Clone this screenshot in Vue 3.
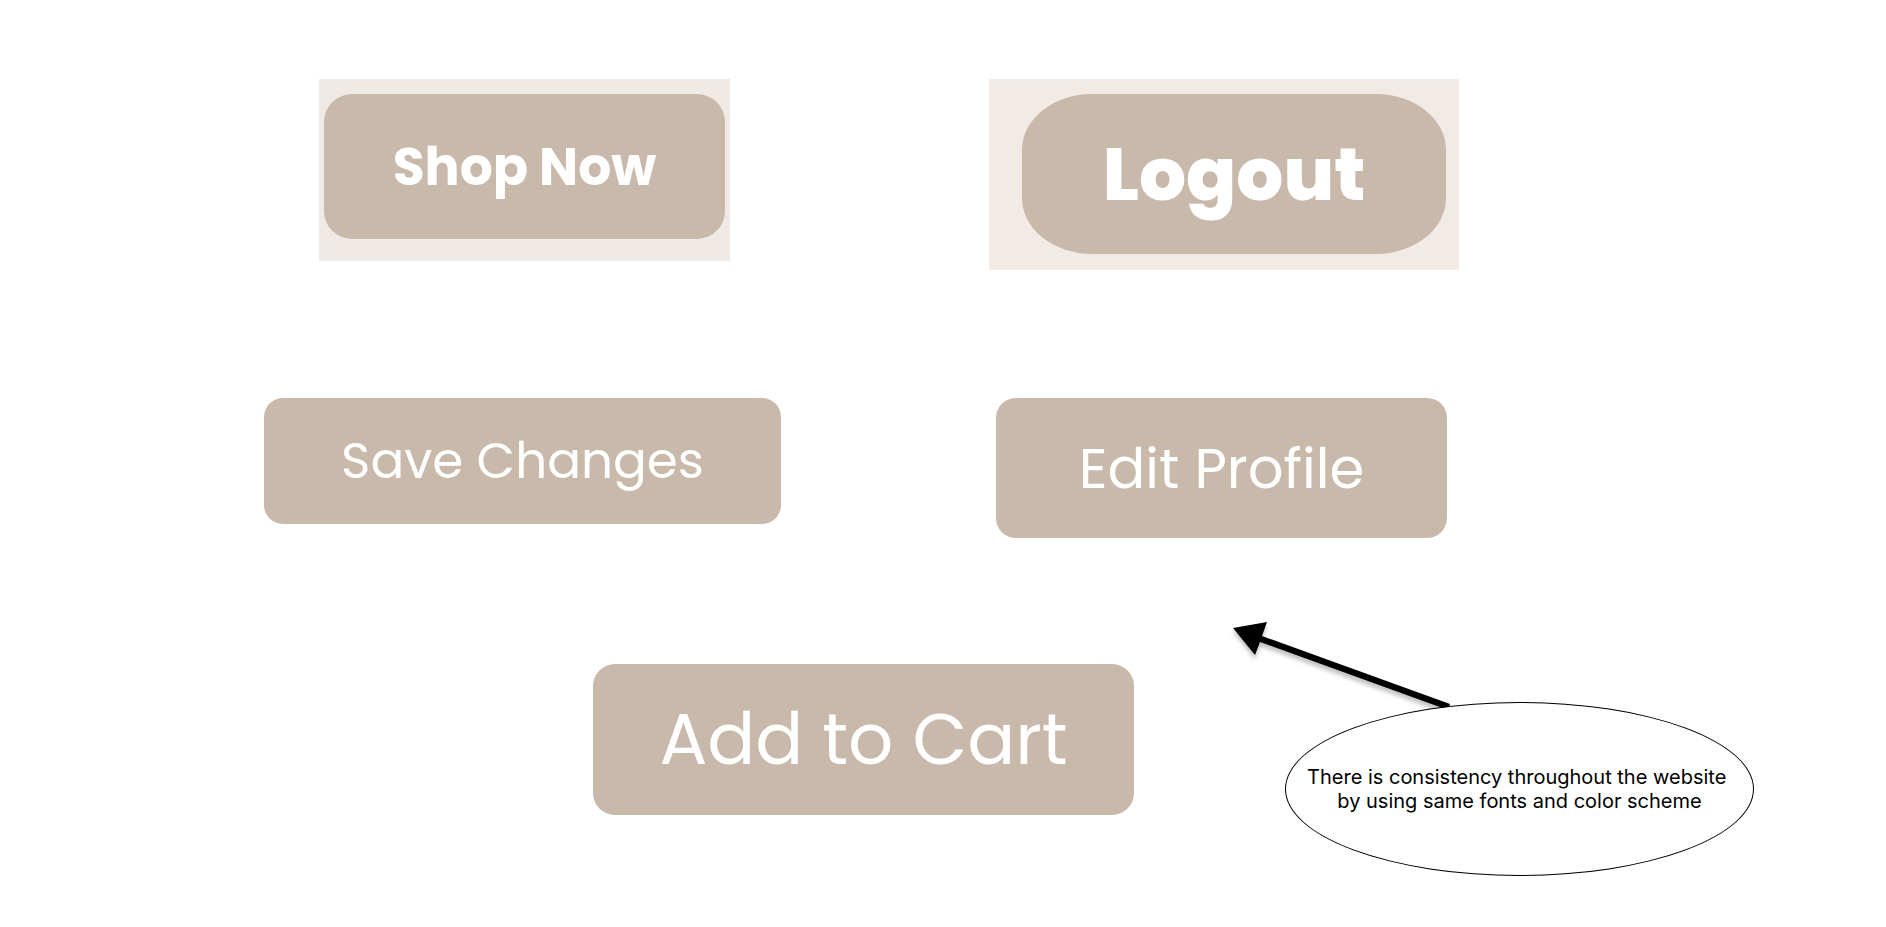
<script setup>
</script>

<template>
  <main class="board">
    <section class="row row-top">
      <div class="frame frame-shop">
        <button type="button" class="btn btn-shop">Shop Now</button>
      </div>
      <div class="frame frame-logout">
        <button type="button" class="btn btn-logout">Logout</button>
      </div>
    </section>

    <section class="row row-middle">
      <button type="button" class="btn btn-save">Save Changes</button>
      <button type="button" class="btn btn-edit">Edit Profile</button>
    </section>

    <section class="row row-bottom">
      <button type="button" class="btn btn-cart">Add to Cart</button>
      <aside class="note">
        <svg class="arrow" width="240" height="110" viewBox="0 0 240 110" aria-hidden="true">
          <path d="M10 16 L44 10 L39 24 L227 92 L225 98 L37 30 L32 43 Z" />
        </svg>
        <p class="bubble">There is consistency throughout the website&nbsp;<br />by using same fonts and color scheme</p>
      </aside>
    </section>
  </main>
</template>

<style>
body {
  margin: 0;
  background: #fff;
}
</style>

<style scoped>
.board {
  padding: 79px 0 52px;
  overflow: hidden;
  font-family: Poppins, Inter, "Liberation Sans", sans-serif;
}

.row {
  display: grid;
  align-items: start;
}

.row-top {
  grid-template-columns: 319fr 411px 259fr 470px 427fr;
}

.row-middle {
  grid-template-columns: 264fr 517px 215fr 451px 439fr;
  margin-top: 128px;
}

.row-bottom {
  grid-template-columns: 593fr 541px 151fr 469px 132fr;
  margin-top: 126px;
}

.row > :first-child {
  grid-column: 2;
}

.row > :last-child {
  grid-column: 4;
}

.frame {
  display: flex;
}

.frame-shop {
  padding: 15px 5px 22px;
  background: #efeae6;
}

.frame-logout {
  padding: 15px 13px 16px 33px;
  background: #f2eae5;
}

.btn {
  width: 100%;
  padding: 0;
  border: 0;
  background: #c9b9aa;
  color: #fff;
  font-family: inherit;
  font-weight: 400;
  white-space: nowrap;
  cursor: pointer;
}

.btn-shop {
  height: 145px;
  border-radius: 28px;
  font-size: 52px;
  font-weight: 700;
}

.btn-logout {
  height: 160px;
  border-radius: 70px / 56px;
  font-size: 74px;
  font-weight: 800;
}

.btn-save {
  height: 126px;
  border-radius: 19px;
  font-size: 50px;
}

.btn-edit {
  height: 140px;
  border-radius: 20px;
  font-size: 56px;
}

.btn-cart {
  height: 151px;
  border-radius: 22px;
  font-size: 71px;
}

.note {
  position: relative;
  margin-top: 38px;
}

.arrow {
  position: absolute;
  left: -62px;
  top: -90px;
  filter: drop-shadow(0 4px 2px rgba(0, 0, 0, 0.25));
}

.bubble {
  position: relative;
  display: block;
  box-sizing: border-box;
  margin: 0;
  padding: 62px 0;
  border: 1px solid #000;
  border-radius: 50%;
  background: #fff;
  color: #000;
  font: 400 20px/24px Inter, "Liberation Sans", sans-serif;
  text-align: center;
  white-space: nowrap;
}
</style>
